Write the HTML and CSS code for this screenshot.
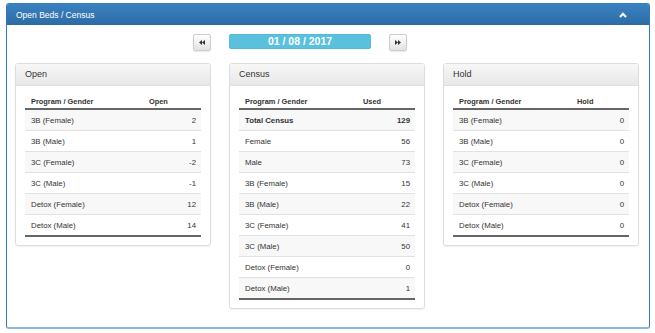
FILE: index.html
```html
<!DOCTYPE html>
<html lang="en">
<head>
   <meta charset="UTF-8">
   <title>Open Beds / Census</title>
   <link rel="stylesheet" href="styles.css">
</head>
<body>
   <div class="panel">
       <div class="panel-heading">
           <span>Open Beds / Census</span>
           <svg class="chevron" width="8" height="6" viewBox="0 0 8 6"><polyline points="1,5 4,1.8 7,5" fill="none" stroke="#fff" stroke-width="2"/></svg>
       </div>
       <div class="panel-body">
           <div class="date-nav">
               <button class="nav-btn"><svg width="6" height="5" viewBox="0 0 6 5"><polygon points="3,0 0,2.5 3,5" fill="#333"/><polygon points="6,0 3,2.5 6,5" fill="#333"/></svg></button>
               <div class="date">01 / 08 / 2017</div>
               <button class="nav-btn"><svg width="6" height="5" viewBox="0 0 6 5"><polygon points="0,0 3,2.5 0,5" fill="#333"/><polygon points="3,0 6,2.5 3,5" fill="#333"/></svg></button>
           </div>
           <div class="cols">
               <div class="card">
                   <div class="card-heading">Open</div>
                   <div class="card-body">
                       <table>
                           <thead><tr><th>Program / Gender</th><th class="num-head">Open</th></tr></thead>
                           <tbody>
                               <tr><td>3B (Female)</td><td class="num">2</td></tr>
                               <tr><td>3B (Male)</td><td class="num">1</td></tr>
                               <tr><td>3C (Female)</td><td class="num">-2</td></tr>
                               <tr><td>3C (Male)</td><td class="num">-1</td></tr>
                               <tr><td>Detox (Female)</td><td class="num">12</td></tr>
                               <tr><td>Detox (Male)</td><td class="num">14</td></tr>
                           </tbody>
                       </table>
                   </div>
               </div>
               <div class="card">
                   <div class="card-heading">Census</div>
                   <div class="card-body">
                       <table>
                           <thead><tr><th>Program / Gender</th><th class="num-head">Used</th></tr></thead>
                           <tbody>
                               <tr class="total"><td>Total Census</td><td class="num">129</td></tr>
                               <tr><td>Female</td><td class="num">56</td></tr>
                               <tr><td>Male</td><td class="num">73</td></tr>
                               <tr><td>3B (Female)</td><td class="num">15</td></tr>
                               <tr><td>3B (Male)</td><td class="num">22</td></tr>
                               <tr><td>3C (Female)</td><td class="num">41</td></tr>
                               <tr><td>3C (Male)</td><td class="num">50</td></tr>
                               <tr><td>Detox (Female)</td><td class="num">0</td></tr>
                               <tr><td>Detox (Male)</td><td class="num">1</td></tr>
                           </tbody>
                       </table>
                   </div>
               </div>
               <div class="card">
                   <div class="card-heading">Hold</div>
                   <div class="card-body">
                       <table>
                           <thead><tr><th>Program / Gender</th><th class="num-head">Hold</th></tr></thead>
                           <tbody>
                               <tr><td>3B (Female)</td><td class="num">0</td></tr>
                               <tr><td>3B (Male)</td><td class="num">0</td></tr>
                               <tr><td>3C (Female)</td><td class="num">0</td></tr>
                               <tr><td>3C (Male)</td><td class="num">0</td></tr>
                               <tr><td>Detox (Female)</td><td class="num">0</td></tr>
                               <tr><td>Detox (Male)</td><td class="num">0</td></tr>
                           </tbody>
                       </table>
                   </div>
               </div>
           </div>
       </div>
   </div>
</body>
</html>
```

FILE: styles.css
```css
body {
    margin: 0;
    background: #fff;
    font-family: "Liberation Sans", Arial, sans-serif;
    color: #333;
}

.panel {
    margin: 3px 5px 0 6px;
    border: 1px solid #337ab7;
    border-bottom: 2px solid #8bb7e0;
    border-radius: 3px;
    overflow: hidden;
}

.panel-heading {
    height: 21px;
    padding: 0 22px 0 9px;
    display: flex;
    align-items: center;
    justify-content: space-between;
    background: linear-gradient(to bottom, #3b82c1 0, #2c6ba5 100%);
    color: #fff;
    font-size: 8.5px;
}

.panel-body {
    padding: 9px 0 18px 8px;
}

.date-nav {
    display: flex;
    align-items: flex-start;
    margin-left: 178px;
}

.nav-btn {
    width: 18px;
    height: 17px;
    padding: 0;
    border: 1px solid #ccc;
    border-radius: 2px;
    background: linear-gradient(to bottom, #fff 0, #e3e3e3 100%);
    box-shadow: 0 1px 1px rgba(0, 0, 0, 0.08);
    display: flex;
    align-items: center;
    justify-content: center;
}

.date {
    width: 142px;
    height: 15px;
    margin: 0 18px;
    box-sizing: border-box;
    background-color: #5bc0de;
    border: 1px solid #4dbbdb;
    border-radius: 2px;
    color: #fff;
    font-weight: bold;
    font-size: 10.5px;
    line-height: 13px;
    text-align: center;
}

.cols {
    display: grid;
    grid-template-columns: repeat(3, 196px);
    gap: 18px;
    align-items: start;
    margin-top: 12px;
}

.card {
    border: 1px solid #ddd;
    border-radius: 3px;
    box-shadow: 0 1px 2px rgba(0, 0, 0, 0.06);
    overflow: hidden;
}

.card-heading {
    height: 21px;
    line-height: 21px;
    padding-left: 9px;
    border-bottom: 1px solid #ddd;
    background: linear-gradient(to bottom, #f7f7f7 0, #e8e8e8 100%);
    font-size: 9px;
    color: #333;
}

.card-body {
    padding: 8px 9px 8px 9px;
}

table {
    width: 100%;
    border-collapse: collapse;
    font-size: 7.8px;
}

th {
    height: 14px;
    padding: 0 6px;
    text-align: left;
    font-weight: bold;
    font-size: 7.4px;
    border-bottom: 2px solid #666;
    vertical-align: middle;
}

th.num-head {
    width: 46px;
}

td {
    height: 20px;
    padding: 0 5px 0 6px;
    border-top: 1px solid #e2e2e2;
    vertical-align: middle;
}

tbody tr:nth-child(odd) {
    background-color: #f8f8f8;
}

tbody tr:last-child td {
    border-bottom: 2px solid #666;
}

td.num {
    text-align: right;
}

tr.total td {
    font-weight: bold;
}
```
